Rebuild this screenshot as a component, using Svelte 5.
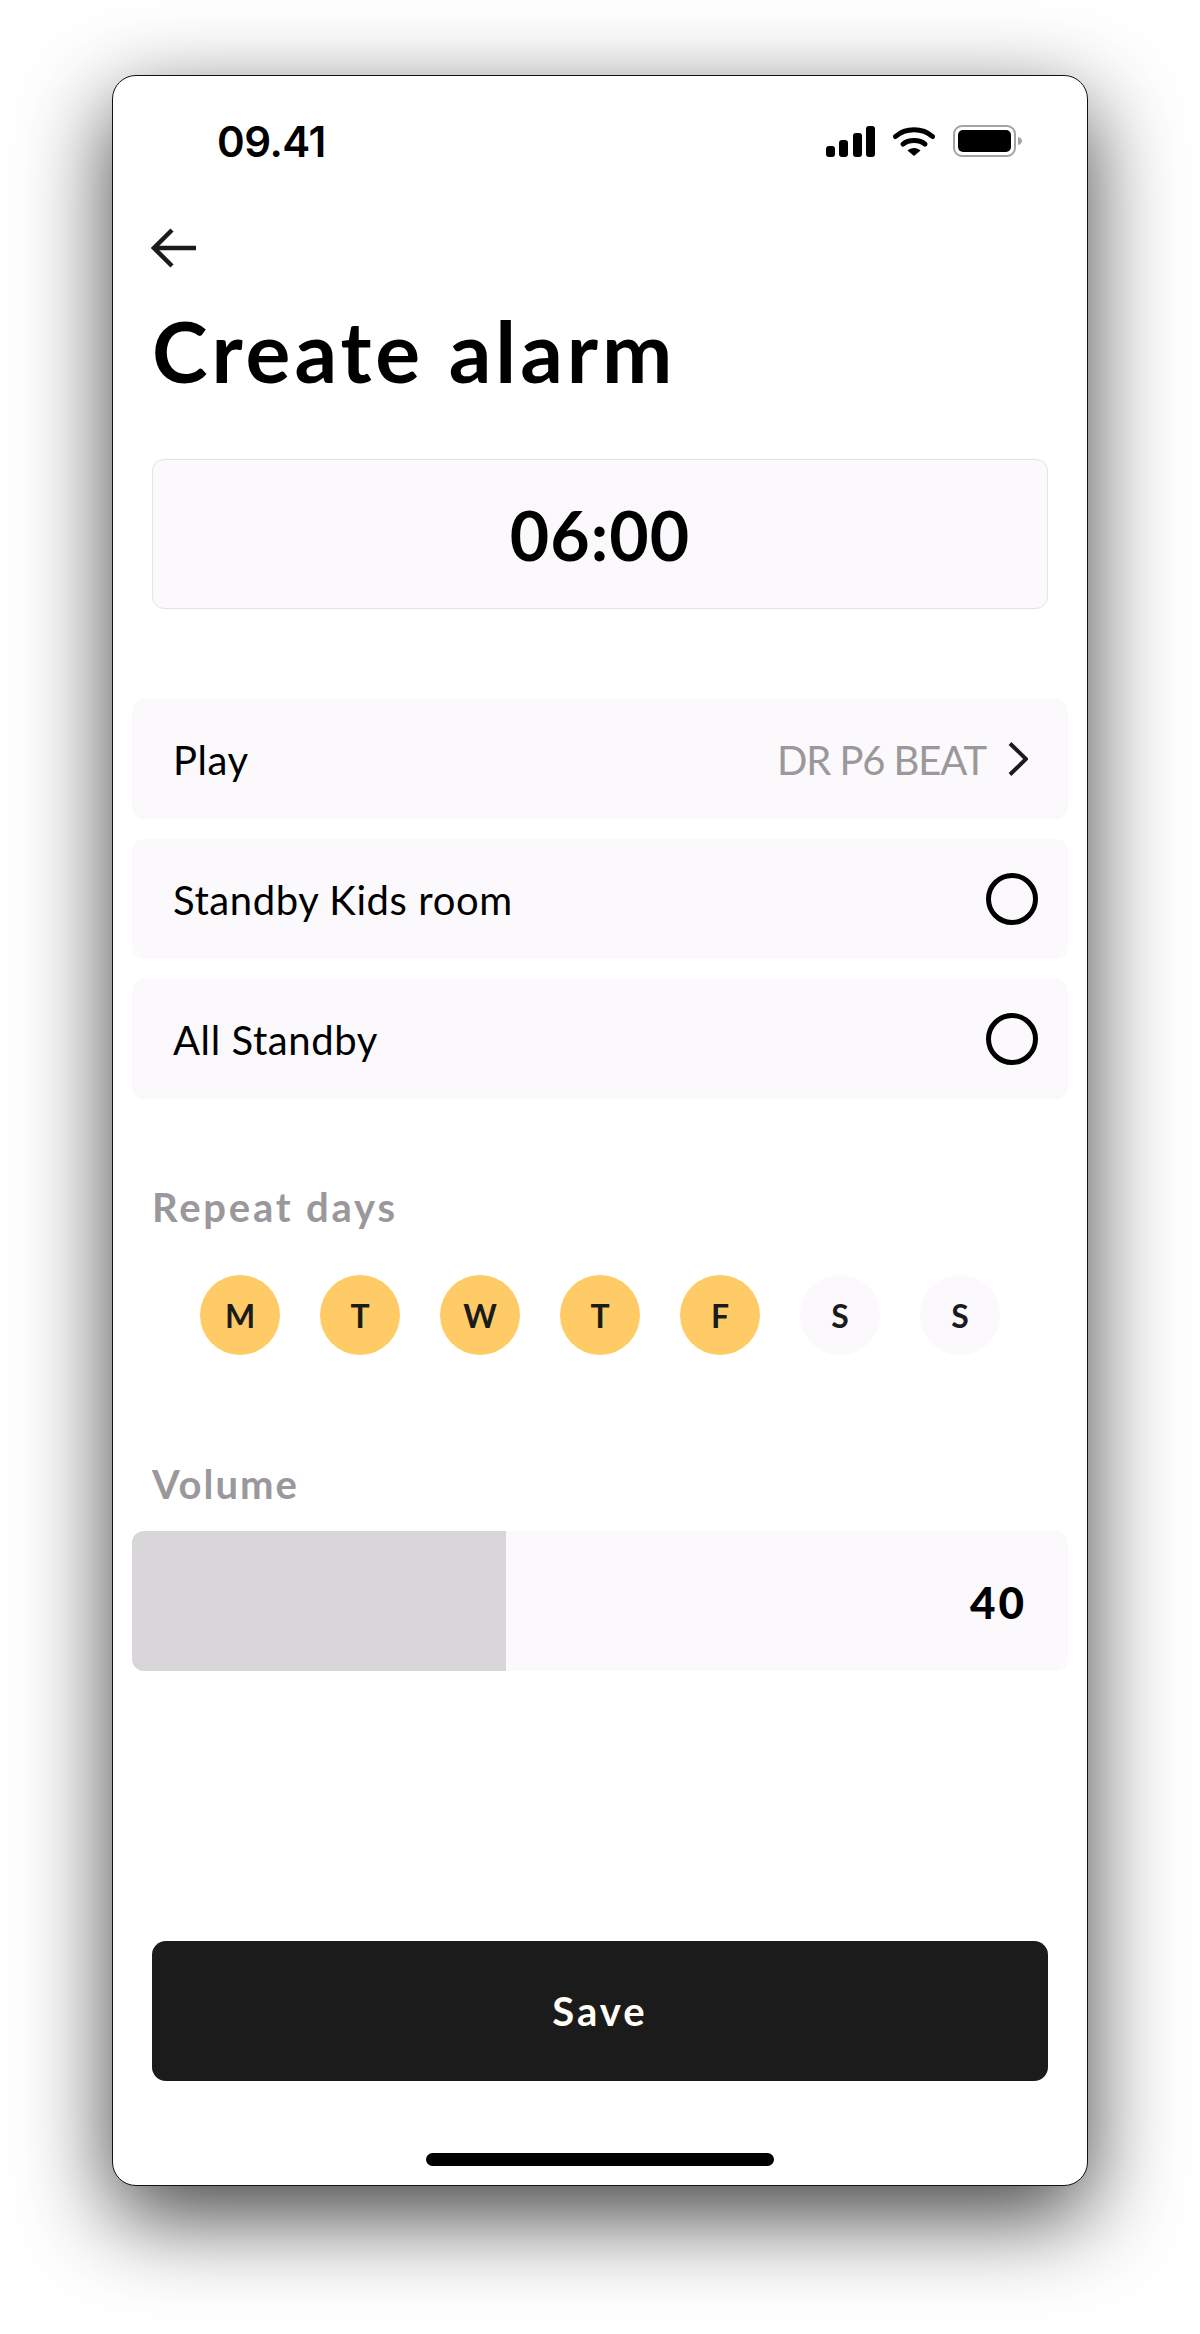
<script>
  const days = [
    { label: 'M', on: true },
    { label: 'T', on: true },
    { label: 'W', on: true },
    { label: 'T', on: true },
    { label: 'F', on: true },
    { label: 'S', on: false },
    { label: 'S', on: false }
  ];
  const standby = ['Standby Kids room', 'All Standby'];
  const volume = 40;
</script>

<div class="page">
  <div class="phone">
    <div class="status">
      <span class="clock">09.41</span>
      <div class="status-icons">
        <svg class="signal" width="49" height="31" viewBox="0 0 49 31" aria-hidden="true">
          <rect x="0" y="20" width="9" height="11" rx="3" />
          <rect x="13" y="14" width="9" height="17" rx="3" />
          <rect x="27" y="7" width="9" height="24" rx="3" />
          <rect x="40" y="0" width="9" height="31" rx="3" />
        </svg>
        <svg class="wifi" width="42" height="30" viewBox="0 0 42 30" aria-hidden="true">
          <path d="M2.5 10.5C12.5 1.5 29.5 1.5 39.5 10.5" fill="none" stroke="#000" stroke-width="5" stroke-linecap="round" />
          <path d="M10 18.2C15.5 13.4 26.5 13.4 32 18.2" fill="none" stroke="#000" stroke-width="5" stroke-linecap="round" />
          <path d="M14.5 24.5C18 21 24 21 27.5 24.5L21 30Z" />
        </svg>
        <svg class="battery" width="69" height="32" viewBox="0 0 69 32" aria-hidden="true">
          <rect x="1" y="1" width="61" height="30" rx="8" fill="none" stroke="#a3a3a3" stroke-width="2" />
          <rect x="5" y="5" width="53" height="22" rx="5" />
          <path d="M65 12C67.5 12.6 69 14 69 16C69 18 67.5 19.4 65 20Z" fill="#a3a3a3" />
        </svg>
      </div>
    </div>

    <svg class="back" width="46" height="40" viewBox="0 0 46 40" aria-hidden="true">
      <path d="M45 20H3M21 2L3 20L21 38" fill="none" stroke="#1c1b1c" stroke-width="4.5" />
    </svg>

    <h1 class="title">Create alarm</h1>

    <div class="time-box">06:00</div>

    <div class="rows">
      <div class="row">
        <span class="row-name">Play</span>
        <div class="row-end">
          <span class="station">DR P6 BEAT</span>
          <svg width="20" height="34" viewBox="0 0 20 34" aria-hidden="true">
            <path d="M2 1.5L18 17L2 32.5" fill="none" stroke="#1c1b1c" stroke-width="4" />
          </svg>
        </div>
      </div>
      {#each standby as name}
        <div class="row">
          <span class="row-name">{name}</span>
          <span class="radio"></span>
        </div>
      {/each}
    </div>

    <div class="label repeat-label">Repeat days</div>
    <div class="days">
      {#each days as day}
        <span class="day" class:on={day.on}>{day.label}</span>
      {/each}
    </div>

    <div class="label volume-label">Volume</div>
    <div class="volume">
      <div class="volume-fill" style:width="{volume}%"></div>
      <span class="volume-value">{volume}</span>
    </div>

    <button class="save">Save</button>
    <div class="home-bar"></div>
  </div>
</div>

<style>
  :global(body) {
    margin: 0;
    background: #fff;
  }

  .page {
    height: 2334px;
    box-sizing: border-box;
    padding-top: 75px;
    overflow: hidden;
    font-family: "Lato", "Liberation Sans", sans-serif;
  }

  .phone {
    width: 976px;
    height: 2111px;
    margin: 0 auto;
    box-sizing: border-box;
    display: flex;
    flex-direction: column;
    padding: 0 19px 19px;
    background: #fff;
    border: 1px solid #111;
    border-radius: 24px;
    box-shadow: 0 30px 90px rgba(0, 0, 0, 0.75);
  }

  .status {
    height: 130px;
    flex-shrink: 0;
    display: flex;
    align-items: center;
    justify-content: space-between;
    padding-left: 85px;
    padding-right: 46px;
  }

  .clock {
    font-family: "Inter", "Liberation Sans", sans-serif;
    font-size: 42px;
    font-weight: 600;
    letter-spacing: -0.5px;
    color: #000;
  }

  .status-icons {
    display: flex;
    align-items: center;
    gap: 18px;
  }

  .signal,
  .wifi,
  .battery {
    display: block;
  }

  .back {
    display: block;
    flex-shrink: 0;
    margin: 22px 0 0 19px;
  }

  .title {
    margin: 33px 0 0 20px;
    font-size: 84px;
    line-height: 100px;
    font-weight: 700;
    color: #000;
    letter-spacing: 4px;
  }

  .time-box {
    height: 150px;
    flex-shrink: 0;
    box-sizing: border-box;
    margin: 58px 20px 0;
    display: flex;
    align-items: center;
    justify-content: center;
    background: #fbf9fc;
    border: 1px solid #e4e2e7;
    border-radius: 12px;
    font-size: 68px;
    font-weight: 700;
    color: #000;
    letter-spacing: 1px;
  }

  .rows {
    margin-top: 90px;
    display: flex;
    flex-direction: column;
    gap: 20px;
  }

  .row {
    height: 120px;
    box-sizing: border-box;
    padding: 0 30px 0 41px;
    display: flex;
    align-items: center;
    justify-content: space-between;
    background: #fbf9fc;
    border-radius: 12px;
    font-size: 40px;
    color: #000;
    letter-spacing: 0.6px;
  }

  .row-name {
    padding-top: 2px;
  }

  .row-end {
    display: flex;
    align-items: center;
    gap: 22px;
    padding-right: 10px;
  }

  .row-end svg {
    display: block;
  }

  .station {
    color: #9a989b;
    letter-spacing: -1.1px;
    padding-top: 2px;
  }

  .radio {
    width: 52px;
    height: 52px;
    box-sizing: border-box;
    border: 5px solid #000;
    border-radius: 50%;
  }

  .label {
    font-size: 40px;
    line-height: 50px;
    font-weight: 700;
    color: #9a989b;
    margin-left: 20px;
    letter-spacing: 2px;
  }

  .repeat-label {
    margin-top: 83px;
    letter-spacing: 2.8px;
  }

  .days {
    margin-top: 43px;
    display: flex;
    justify-content: center;
    gap: 40px;
  }

  .day {
    width: 80px;
    height: 80px;
    display: flex;
    align-items: center;
    justify-content: center;
    border-radius: 50%;
    background: #fbf9fc;
    font-size: 32px;
    font-weight: 700;
    color: #1c1b1c;
  }

  .day.on {
    background: #ffcb66;
  }

  .volume-label {
    margin-top: 104px;
  }

  .volume {
    position: relative;
    height: 140px;
    flex-shrink: 0;
    margin-top: 22px;
    display: flex;
    align-items: center;
    justify-content: flex-end;
    padding-right: 41px;
    background: #fbf9fc;
    border-radius: 12px;
    overflow: hidden;
  }

  .volume-fill {
    position: absolute;
    left: 0;
    top: 0;
    bottom: 0;
    background: #d8d6d9;
  }

  .volume-value {
    position: relative;
    font-size: 44px;
    font-weight: 900;
    color: #000;
    letter-spacing: 3px;
    padding-top: 2px;
  }

  .save {
    margin: auto 20px 0;
    height: 140px;
    flex-shrink: 0;
    border: 0;
    border-radius: 14px;
    background: #1c1b1c;
    color: #fffdf5;
    font-family: inherit;
    font-size: 40px;
    font-weight: 700;
    letter-spacing: 3px;
  }

  .home-bar {
    width: 348px;
    height: 13px;
    flex-shrink: 0;
    margin: 72px auto 0;
    background: #000;
    border-radius: 7px;
  }
</style>
